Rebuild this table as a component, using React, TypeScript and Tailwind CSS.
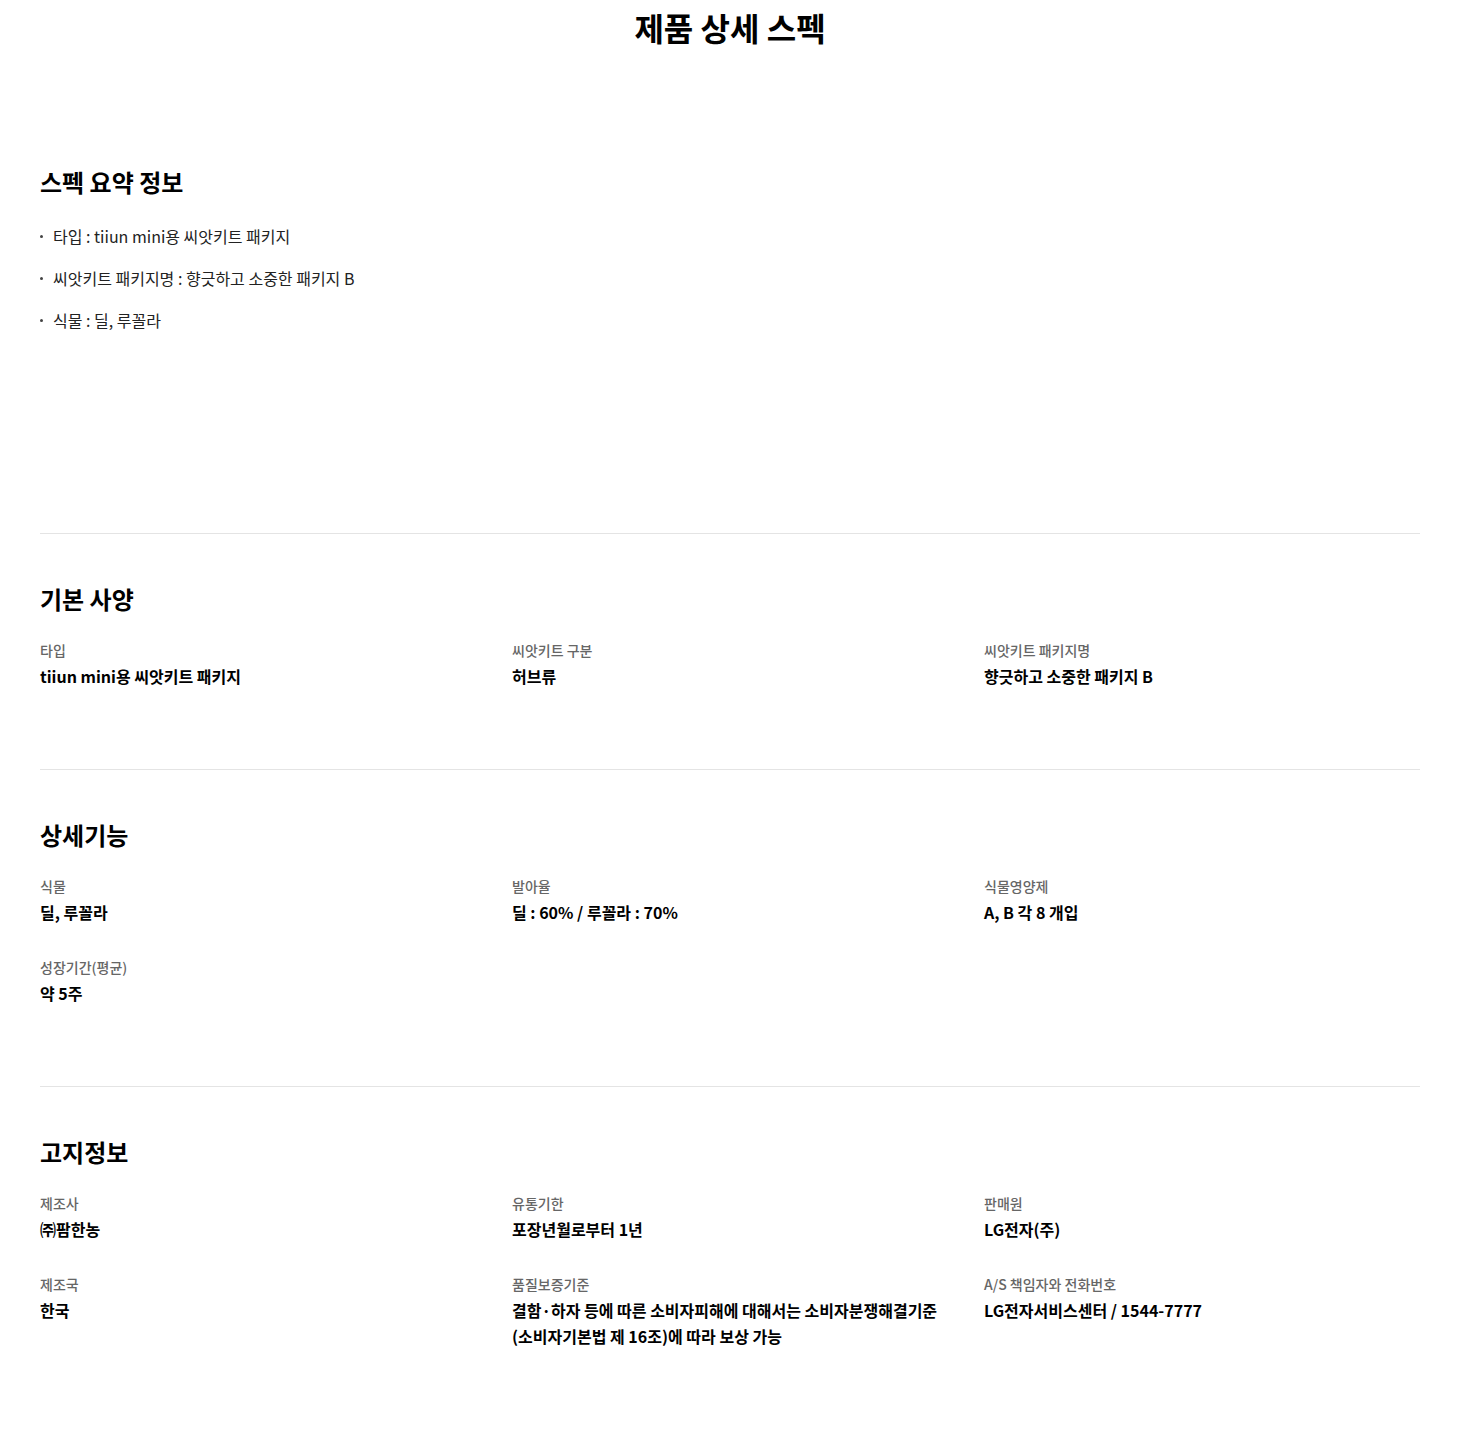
import React from 'react';

type Spec = { label: string; value: string[] };

const basic: Spec[] = [
  { label: '타입', value: ['tiiun mini용 씨앗키트 패키지'] },
  { label: '씨앗키트 구분', value: ['허브류'] },
  { label: '씨앗키트 패키지명', value: ['향긋하고 소중한 패키지 B'] },
];

const detail: Spec[] = [
  { label: '식물', value: ['딜, 루꼴라'] },
  { label: '발아율', value: ['딜 : 60% / 루꼴라 : 70%'] },
  { label: '식물영양제', value: ['A, B 각 8 개입'] },
  { label: '성장기간(평균)', value: ['약 5주'] },
];

const notice: Spec[] = [
  { label: '제조사', value: ['㈜팜한농'] },
  { label: '유통기한', value: ['포장년월로부터 1년'] },
  { label: '판매원', value: ['LG전자(주)'] },
  { label: '제조국', value: ['한국'] },
  { label: '품질보증기준', value: ['결함·하자 등에 따른 소비자피해에 대해서는 소비자분쟁해결기준', '(소비자기본법 제 16조)에 따라 보상 가능'] },
  { label: 'A/S 책임자와 전화번호', value: ['LG전자서비스센터 / 1544-7777'] },
];

function SpecSection({ title, items }: { title: string; items: Spec[] }) {
  return (
    <section className="border-t border-[#e4e4e4] pt-[47px] pb-[80px]">
      <h3 className="text-[24px] leading-[36px] font-bold text-black">{title}</h3>
      <dl className="mt-[23px] grid grid-cols-[440px_440px_440px] gap-x-8 gap-y-[32px]">
        {items.map((it) => (
          <div key={it.label}>
            <dt className="text-[14px] leading-[20px] font-medium text-[#666]">{it.label}</dt>
            <dd className="mt-[3px] text-[16px] leading-[26px] font-bold text-black">
              {it.value.map((line) => (
                <div key={line}>{line}</div>
              ))}
            </dd>
          </div>
        ))}
      </dl>
    </section>
  );
}

export default function App() {
  return (
    <div className="min-h-[1429px] bg-white px-10 font-['Noto_Sans_CJK_KR',sans-serif] text-black">
      <h2 className="pt-[5px] text-center text-[32px] leading-[44px] font-bold text-black">제품 상세 스펙</h2>

      <section className="pt-[115px] pb-[200px]">
        <h3 className="text-[24px] leading-[36px] font-bold">스펙 요약 정보</h3>
        <ul className="mt-[23px] flex flex-col gap-4">
          {['타입 : tiiun mini용 씨앗키트 패키지', '씨앗키트 패키지명 : 향긋하고 소중한 패키지 B', '식물 : 딜, 루꼴라'].map((t) => (
            <li key={t} className="flex items-center text-[16px] leading-[26px] text-[#222]">
              <span className="mr-[10px] h-[3px] w-[3px] rounded-full bg-[#444]" />
              {t}
            </li>
          ))}
        </ul>
      </section>

      <SpecSection title="기본 사양" items={basic} />
      <SpecSection title="상세기능" items={detail} />
      <SpecSection title="고지정보" items={notice} />
    </div>
  );
}
